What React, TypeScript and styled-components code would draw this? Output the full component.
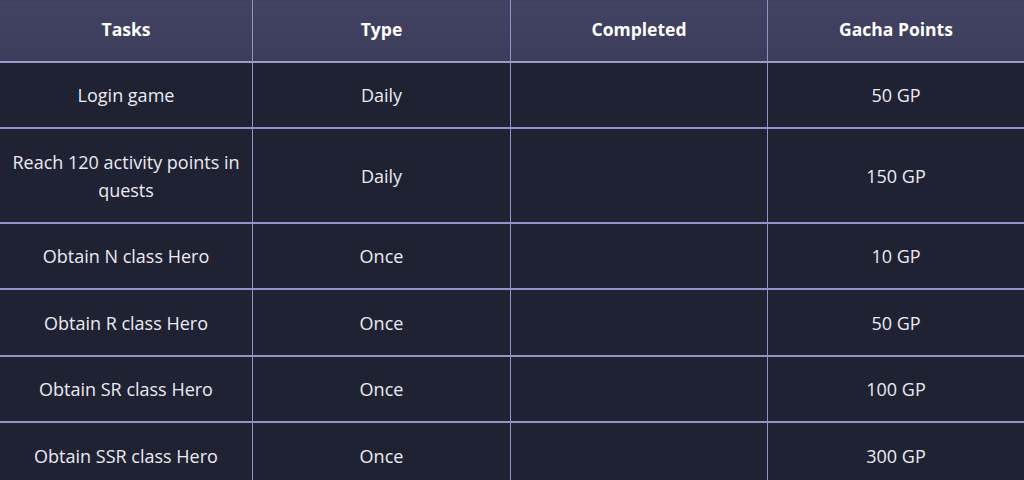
import React from "react";
import styled, { createGlobalStyle } from "styled-components";

const GlobalStyle = createGlobalStyle`
  html, body {
    margin: 0;
    padding: 0;
    background: #1e2132;
  }
  body {
    font-family: "Open Sans", "Noto Sans", sans-serif;
  }
`;

type Task = {
  name: string;
  type: string;
  points: number;
};

const tasks: Task[] = [
  { name: "Login game", type: "Daily", points: 50 },
  { name: "Reach 120 activity points in quests", type: "Daily", points: 150 },
  { name: "Obtain N class Hero", type: "Once", points: 10 },
  { name: "Obtain R class Hero", type: "Once", points: 50 },
  { name: "Obtain SR class Hero", type: "Once", points: 100 },
  { name: "Obtain SSR class Hero", type: "Once", points: 300 },
];

function App() {
  return (
    <>
      <GlobalStyle />
      <Table>
        <colgroup>
          <Col $w={253} />
          <Col $w={258} />
          <Col $w={257} />
          <Col $w={257} />
        </colgroup>
        <thead>
          <tr>
            <HeadCell>Tasks</HeadCell>
            <HeadCell>Type</HeadCell>
            <HeadCell>Completed</HeadCell>
            <HeadCell>Gacha Points</HeadCell>
          </tr>
        </thead>
        <tbody>
          {tasks.map((t) => (
            <tr key={t.name}>
              <Cell>{t.name}</Cell>
              <Cell>{t.type}</Cell>
              <Cell></Cell>
              <Cell>{t.points} GP</Cell>
            </tr>
          ))}
        </tbody>
      </Table>
    </>
  );
}

export default App;

const Table = styled.table`
  width: 1025px;
  table-layout: fixed;
  border-collapse: collapse;
  margin-top: -1px;
  margin-left: -1px;
  color: #eceaf2;
`;

const Col = styled.col<{ $w: number }>`
  width: ${(p) => p.$w}px;
`;

const HeadCell = styled.th`
  height: 57px;
  padding: 0 8px 4px;
  background: linear-gradient(180deg, #424363 0%, #3c3d5b 100%);
  border: 1px solid #9093c4;
  border-bottom: 2px solid #9a9dcc;
  font-weight: 700;
  font-size: 17.5px;
  color: #ffffff;
  text-align: center;
  vertical-align: middle;
`;

const Cell = styled.td`
  padding: 18.2px 6px 18.3px;
  border: 1px solid #9093c4;
  border-bottom: 2px solid #9093c4;
  font-size: 18px;
  line-height: 28px;
  text-align: center;
  vertical-align: middle;
  background: #1f2233;
`;
